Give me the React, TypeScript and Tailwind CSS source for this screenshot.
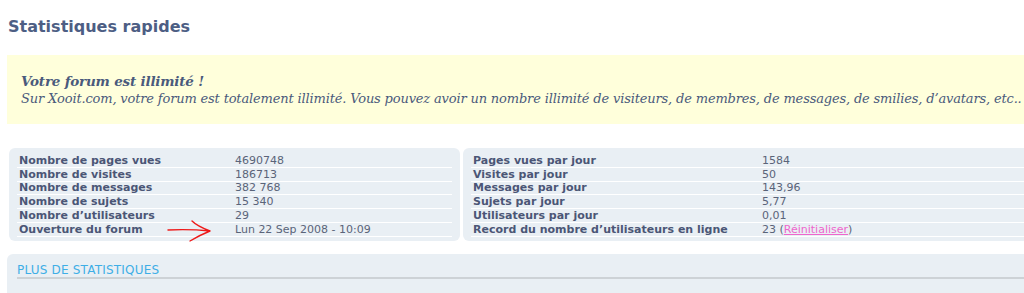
const leftStats: [string, string][] = [
  ['Nombre de pages vues', '4690748'],
  ['Nombre de visites', '186713'],
  ['Nombre de messages', '382 768'],
  ['Nombre de sujets', '15 340'],
  ["Nombre d’utilisateurs", '29'],
  ['Ouverture du forum', 'Lun 22 Sep 2008 - 10:09'],
];

const rightStats: [string, string][] = [
  ['Pages vues par jour', '1584'],
  ['Visites par jour', '50'],
  ['Messages par jour', '143,96'],
  ['Sujets par jour', '5,77'],
  ['Utilisateurs par jour', '0,01'],
];

function StatRow({ label, children, valueCol }: { label: string; children: React.ReactNode; valueCol: string }) {
  return (
    <div className="flex h-[13.8px] items-center border-b border-white leading-none">
      <div className={`${valueCol} shrink-0 pl-[2px] font-bold text-[#4b5676]`}>{label}</div>
      <div className="text-[#5a6479]">{children}</div>
    </div>
  );
}

export default function App() {
  return (
    <div className="relative h-[293px] w-[1024px] overflow-hidden bg-white font-['DejaVu_Sans',sans-serif]">
      <h2 className="pl-[8px] pt-[17px] text-[16px] font-bold leading-[20px] text-[#4d5e84]">
        Statistiques rapides
      </h2>

      {/* info banner */}
      <div className="ml-[7px] mt-[18px] h-[69px] w-[1030px] bg-[#ffffdb] pl-[14px] pt-[17px] font-['DejaVu_Serif',serif] italic text-[#4a5a7c]">
        <div className="text-[13.5px] font-bold leading-[18px] tracking-[-0.2px]">Votre forum est illimité !</div>
        <div className="whitespace-nowrap text-[13px] leading-[18px] tracking-[-0.16px]">
          Sur Xooit.com, votre forum est totalement illimité. Vous pouvez avoir un nombre illimité de visiteurs, de membres, de messages, de smilies, d’avatars, etc..
        </div>
      </div>

      {/* stats */}
      <div className="ml-[9px] mt-[24px] flex w-[1040px] gap-[3px] text-[11px]">
        <div className="w-[451px] rounded-[6px] bg-[#e9eff4] px-[8px] pb-[4px] pt-[6px]">
          {leftStats.map(([l, v]) => (
            <StatRow key={l} label={l} valueCol="w-[218px]">{v}</StatRow>
          ))}
        </div>
        <div className="flex-1 rounded-[6px] bg-[#e9eff4] px-[8px] pb-[4px] pt-[6px]">
          {rightStats.map(([l, v]) => (
            <StatRow key={l} label={l} valueCol="w-[291px]">{v}</StatRow>
          ))}
          <StatRow label="Record du nombre d’utilisateurs en ligne" valueCol="w-[291px]">
            23 (<a href="#" className="text-[#ee66cc] underline">Réinitialiser</a>)
          </StatRow>
        </div>
      </div>

      {/* more stats */}
      <div className="ml-[7px] mt-[13px] h-[60px] w-[1040px] rounded-[6px] bg-[#e9eff4] pl-[10px] pt-[10px]">
        <div className="border-b-2 border-[#cdd2d6] text-[12px] leading-[13px] tracking-[0.2px] text-[#3eaee6]">
          PLUS DE STATISTIQUES
        </div>
      </div>

      {/* hand-drawn annotation arrow */}
      <svg className="pointer-events-none absolute left-0 top-0" width="1024" height="293" fill="none">
        <path
          d="M168 230 Q190 229 210 231 M192 221 Q197 226 210 231 Q200 235 190 241"
          stroke="#ee1a1a"
          strokeWidth="1.4"
          strokeLinecap="round"
          strokeLinejoin="round"
        />
      </svg>
    </div>
  );
}
